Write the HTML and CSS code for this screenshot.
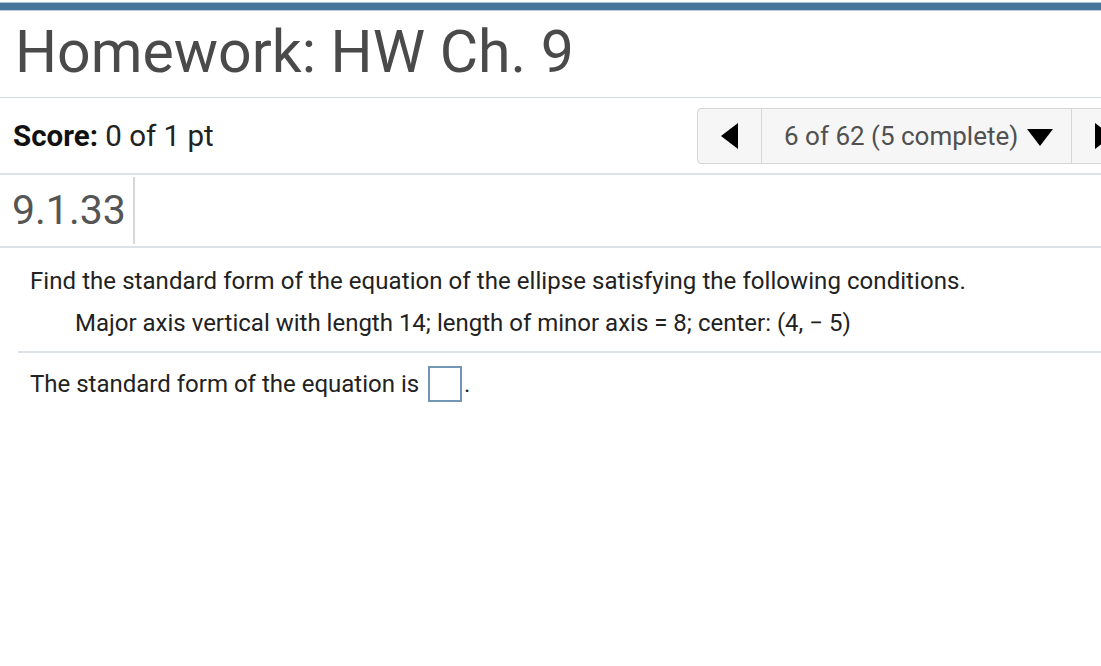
FILE: index.html
```html
<!DOCTYPE html>
<html>
<head>
<meta charset="utf-8">
<link rel="stylesheet" href="styles.css">
</head>
<body>
<div class="topbar"></div>
<h1 class="title">Homework: HW Ch. 9</h1>
<div class="score-row">
  <div class="score"><b>Score:</b> 0 of 1 pt</div>
  <div class="nav">
    <div class="nav-prev"><span class="tri-left"></span></div>
    <div class="nav-mid">6 of 62 (5 complete)<span class="tri-down"></span></div>
    <div class="nav-next"><span class="tri-right"></span></div>
  </div>
</div>
<div class="qid-row"><div class="qid">9.1.33</div></div>
<div class="question">
  <p class="q-text">Find the standard form of the equation of the ellipse satisfying the following conditions.</p>
  <p class="q-cond">Major axis vertical with length 14; length of minor axis = 8; center: (4, &#8722; 5)</p>
  <div class="q-sep"></div>
  <p class="q-answer">The standard form of the equation is <span class="ans-box"></span>.</p>
</div>
</body>
</html>
```
FILE: styles.css
```css
html, body {
  margin: 0;
  padding: 0;
  background: #fff;
  font-family: Roboto, "Liberation Sans", sans-serif;
  overflow: hidden;
}
.topbar {
  margin-top: 2px;
  height: 7px;
  background: #45769a;
  border-top: 1px solid #a9c0d2;
  border-bottom: 1px solid #b9cddc;
}
.title {
  margin: 0;
  padding: 6px 15px 10px;
  font-size: 59px;
  line-height: 70px;
  font-weight: 400;
  color: #4a4a4a;
  border-bottom: 1px solid #d3dae2;
}
.score-row {
  display: flex;
  align-items: center;
  justify-content: space-between;
  padding: 10px 0 9px 13px;
  border-bottom: 2px solid #dde2e7;
}
.score {
  font-size: 29.5px;
  color: #222;
}
.score b {
  font-weight: 700;
  color: #111;
}
.nav {
  display: flex;
  height: 54px;
  width: 420px;
  margin-right: -18px;
  background: #f6f6f6;
  border: 1px solid #d6d6d6;
  border-radius: 4px;
}
.nav-prev {
  width: 63px;
  display: flex;
  align-items: center;
  justify-content: center;
  border-right: 1px solid #d6d6d6;
}
.tri-left {
  width: 0;
  height: 0;
  border-top: 13px solid transparent;
  border-bottom: 13px solid transparent;
  border-right: 17px solid #000;
}
.nav-mid {
  width: 310px;
  display: flex;
  align-items: center;
  padding-left: 22px;
  box-sizing: border-box;
  font-size: 26px;
  color: #505050;
  border-right: 1px solid #d6d6d6;
}
.tri-down {
  margin-left: 9px;
  margin-top: 3px;
  width: 0;
  height: 0;
  border-left: 13px solid transparent;
  border-right: 13px solid transparent;
  border-top: 17px solid #000;
}
.nav-next {
  flex: 1;
  display: flex;
  align-items: center;
  padding-left: 23px;
}
.tri-right {
  width: 0;
  height: 0;
  border-top: 13px solid transparent;
  border-bottom: 13px solid transparent;
  border-left: 17px solid #000;
}
.qid-row {
  display: flex;
  padding: 2px 0 2px;
  border-bottom: 2px solid #dde2e7;
}
.qid {
  width: 121px;
  padding-left: 12px;
  height: 67px;
  line-height: 67px;
  font-size: 41px;
  color: #555;
  border-right: 2px solid #d6d9dc;
}
.question {
  padding: 0 0 0 18px;
}
.q-text {
  margin: 0;
  padding: 19px 0 0 12px;
  font-size: 24px;
  letter-spacing: 0.06px;
  line-height: 28px;
  color: #222;
}
.q-cond {
  margin: 0;
  padding: 14px 0 0 57px;
  font-size: 24px;
  line-height: 28px;
  color: #222;
}
.q-sep {
  margin-top: 14px;
  height: 2px;
  background: #dde2e7;
}
.q-answer {
  margin: 0;
  padding: 13px 0 0 12px;
  font-size: 24px;
  line-height: 28px;
  color: #222;
  display: flex;
  align-items: center;
  white-space: pre;
}
.ans-box {
  display: inline-block;
  width: 30px;
  height: 32px;
  border: 2px solid #7396b4;
  margin: 0 2px 0 3px;
}
```
